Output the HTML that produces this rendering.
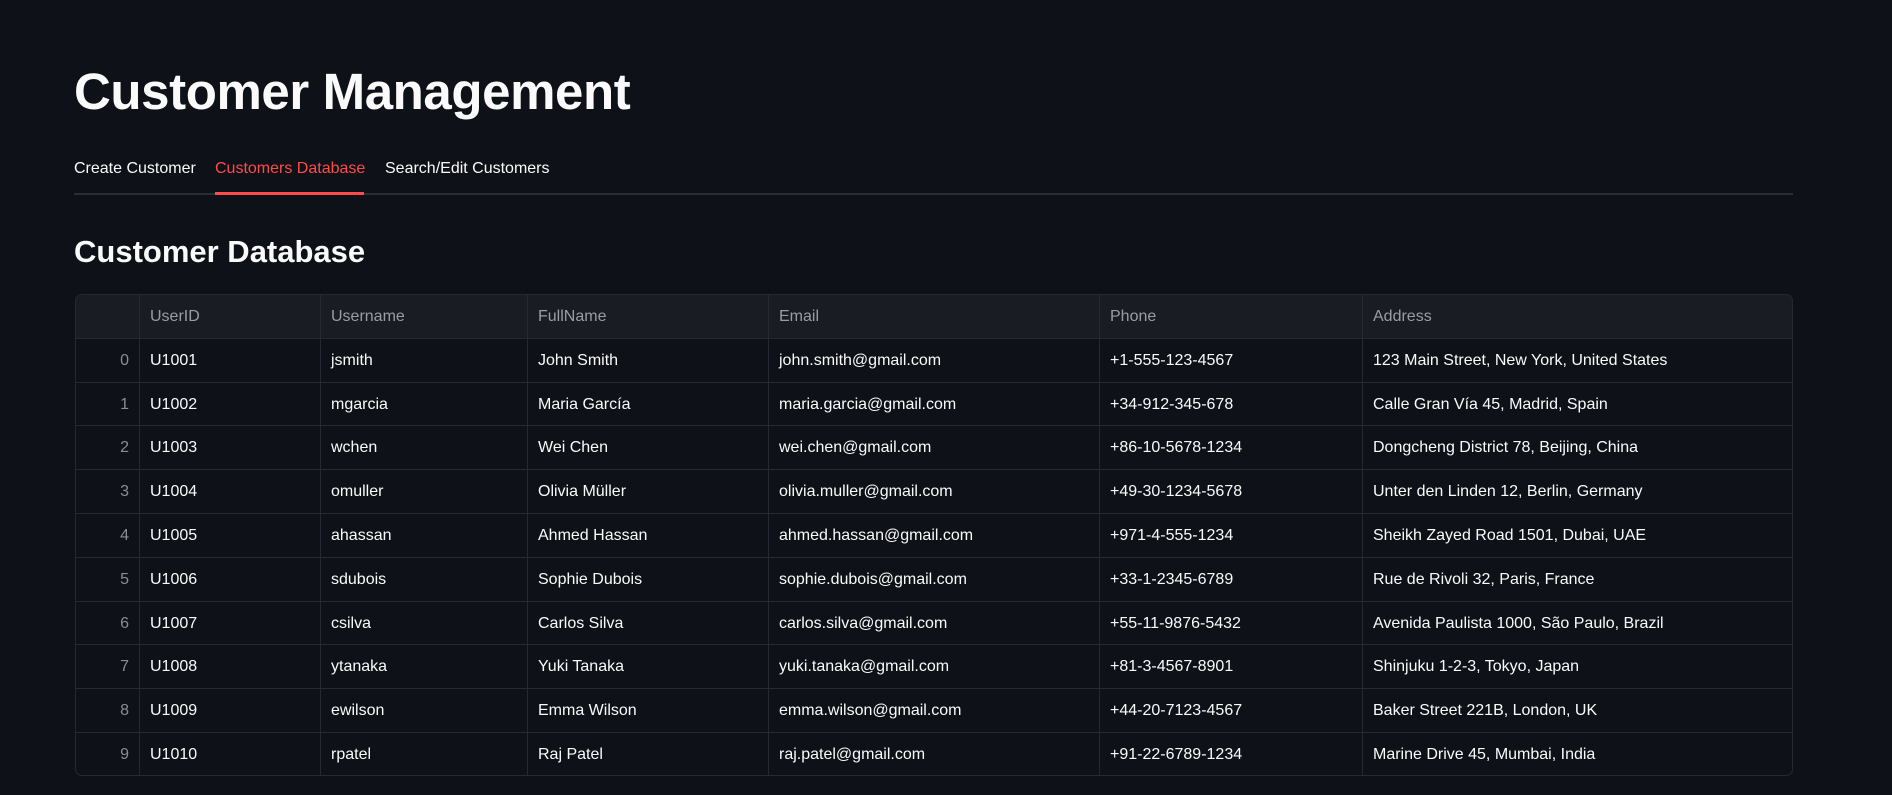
<!DOCTYPE html>
<html><head><meta charset="utf-8"><style>
*{margin:0;padding:0;box-sizing:border-box}
body{width:1892px;height:795px;background:#0e1117;color:#fafafa;font-family:"Liberation Sans",sans-serif;position:relative;overflow:hidden}
h1{position:absolute;left:74px;top:62px;font-size:51px;font-weight:700;letter-spacing:-0.4px;line-height:60px}
.tab{position:absolute;top:159px;font-size:16px;line-height:20px}
.line{position:absolute;left:74px;top:193px;width:1719px;height:2px;background:#2b2d36}
.red{position:absolute;left:215px;top:192px;width:149px;height:3px;background:#ff4b4b}
h3{position:absolute;left:74px;top:232px;font-size:31px;font-weight:700;line-height:40px}
.tbl{position:absolute;left:75px;top:294px;width:1718px;height:482px;border:1px solid #262932;border-radius:7px;overflow:hidden}
.row{position:absolute;left:0;width:100%;height:43.8px;border-bottom:1px solid #262932}
.hdr{background:#1a1c24;color:#9a9ca6}
.c{position:absolute;top:0;height:100%;line-height:43px;padding-left:10px;font-size:16px;border-left:1px solid #262932;white-space:nowrap}
.idx{position:absolute;left:0;width:63px;text-align:right;padding-right:10px;line-height:43px;font-size:16px;color:#8a8d96}
</style></head><body>
<h1>Customer Management</h1>
<div class="tab" style="left:74px">Create Customer</div>
<div class="tab" style="left:215px;color:#ff4b4b">Customers Database</div>
<div class="tab" style="left:385px">Search/Edit Customers</div>
<div class="line"></div><div class="red"></div>
<h3>Customer Database</h3>
<div class="tbl" id="t"></div>
<script>
const cols=[63,244,451,692,1023,1286];
const data=[["UserID","Username","FullName","Email","Phone","Address"],
["U1001","jsmith","John Smith","john.smith@gmail.com","+1-555-123-4567","123 Main Street, New York, United States"],
["U1002","mgarcia","Maria García","maria.garcia@gmail.com","+34-912-345-678","Calle Gran Vía 45, Madrid, Spain"],
["U1003","wchen","Wei Chen","wei.chen@gmail.com","+86-10-5678-1234","Dongcheng District 78, Beijing, China"],
["U1004","omuller","Olivia Müller","olivia.muller@gmail.com","+49-30-1234-5678","Unter den Linden 12, Berlin, Germany"],
["U1005","ahassan","Ahmed Hassan","ahmed.hassan@gmail.com","+971-4-555-1234","Sheikh Zayed Road 1501, Dubai, UAE"],
["U1006","sdubois","Sophie Dubois","sophie.dubois@gmail.com","+33-1-2345-6789","Rue de Rivoli 32, Paris, France"],
["U1007","csilva","Carlos Silva","carlos.silva@gmail.com","+55-11-9876-5432","Avenida Paulista 1000, São Paulo, Brazil"],
["U1008","ytanaka","Yuki Tanaka","yuki.tanaka@gmail.com","+81-3-4567-8901","Shinjuku 1-2-3, Tokyo, Japan"],
["U1009","ewilson","Emma Wilson","emma.wilson@gmail.com","+44-20-7123-4567","Baker Street 221B, London, UK"],
["U1010","rpatel","Raj Patel","raj.patel@gmail.com","+91-22-6789-1234","Marine Drive 45, Mumbai, India"]];
let h="";
data.forEach((r,i)=>{
 h+=`<div class="row${i==0?' hdr':''}" style="top:${i*43.8}px">`;
 if(i>0)h+=`<div class="idx">${i-1}</div>`;
 r.forEach((v,j)=>{h+=`<div class="c" style="left:${cols[j]}px">${v}</div>`});
 h+="</div>";
});
document.getElementById("t").innerHTML=h;
</script>
</body></html>
